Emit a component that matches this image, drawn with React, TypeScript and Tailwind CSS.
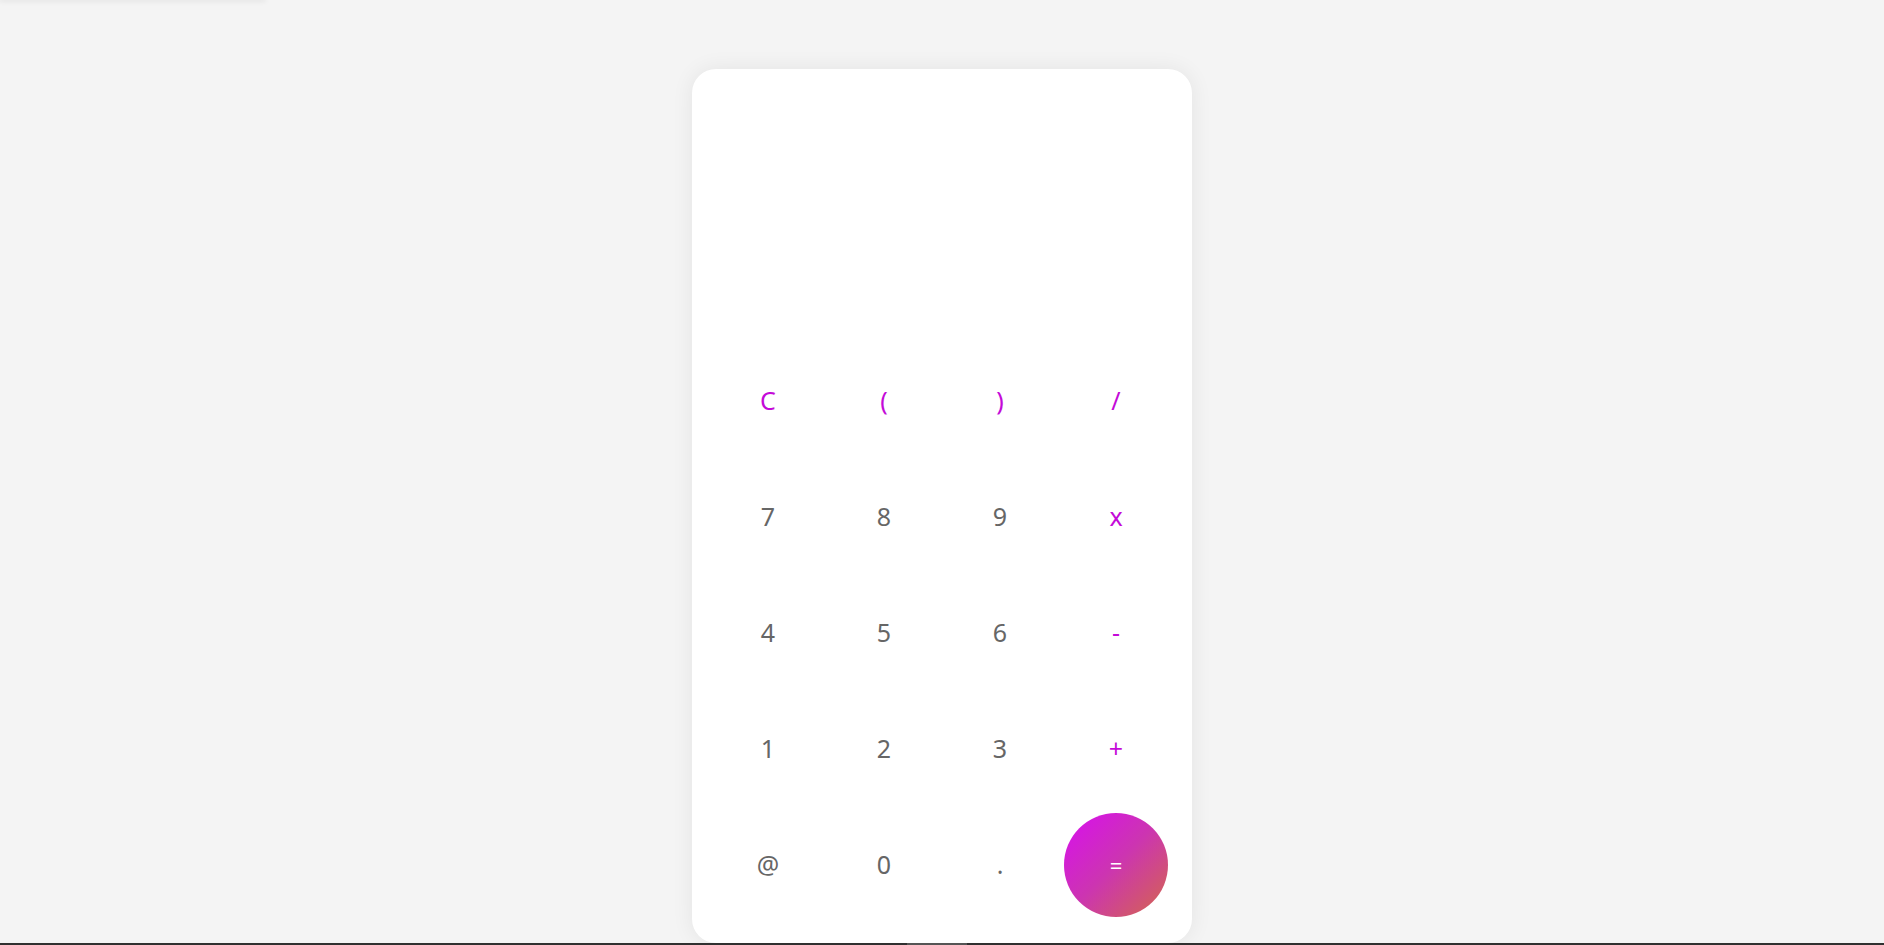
import React, { useState } from 'react';

type Key = { label: string; kind: 'op' | 'num' | 'eq' };

const keys: Key[] = [
    { label: 'C', kind: 'op' },
    { label: '(', kind: 'op' },
    { label: ')', kind: 'op' },
    { label: '/', kind: 'op' },
    { label: '7', kind: 'num' },
    { label: '8', kind: 'num' },
    { label: '9', kind: 'num' },
    { label: 'x', kind: 'op' },
    { label: '4', kind: 'num' },
    { label: '5', kind: 'num' },
    { label: '6', kind: 'num' },
    { label: '-', kind: 'op' },
    { label: '1', kind: 'num' },
    { label: '2', kind: 'num' },
    { label: '3', kind: 'num' },
    { label: '+', kind: 'op' },
    { label: '@', kind: 'num' },
    { label: '0', kind: 'num' },
    { label: '.', kind: 'num' },
    { label: '=', kind: 'eq' },
];

export default function App() {
    const [expr, setExpr] = useState('');

    const press = (k: Key) => {
        if (k.label === 'C') return setExpr('');
        if (k.kind === 'eq') return;
        setExpr((e) => e + k.label);
    };

    return (
        <div
            className="h-screen bg-[#f4f4f4] flex flex-col items-center overflow-hidden"
            style={{ fontFamily: '"Noto Sans", "Open Sans", sans-serif' }}
        >
            {/* faint leftover shadow strip */}
            <div className="self-start h-0 w-[265px] shadow-[0_0_5px_1px_rgba(0,0,0,0.12)]" />

            <div className="mt-[69px] w-[500px] bg-white rounded-[24px] shadow-[0_0_22px_rgba(0,0,0,0.07)] px-6 pt-6 pb-[26px]">
                {/* Display */}
                <div className="h-[244px] mb-3 flex items-end justify-end px-4 pb-4 text-[40px] text-[#555]">
                    {expr}
                </div>

                {/* Keypad */}
                <div className="grid grid-cols-4 gap-3">
                    {keys.map((k) => (
                        <button
                            key={k.label}
                            onClick={() => press(k)}
                            className={
                                k.kind === 'eq'
                                    ? 'w-[104px] h-[104px] rounded-full bg-[linear-gradient(135deg,#d80ef0_0%,#cc35b0_50%,#d4684a_100%)] text-white text-[22px] flex items-center justify-center'
                                    : k.kind === 'op'
                                      ? 'w-[104px] h-[104px] rounded-full text-[#c40ad8] text-[25px] flex items-center justify-center'
                                      : 'w-[104px] h-[104px] rounded-full text-[#666666] text-[25px] flex items-center justify-center'
                            }
                        >
                            {k.label}
                        </button>
                    ))}
                </div>
            </div>

            <div className="flex-1" />
            <div className="w-full h-[2px] bg-[#303030] flex justify-center">
                <div className="w-[60px] h-full bg-[#555555] ml-[-10px]" />
            </div>
        </div>
    );
}
